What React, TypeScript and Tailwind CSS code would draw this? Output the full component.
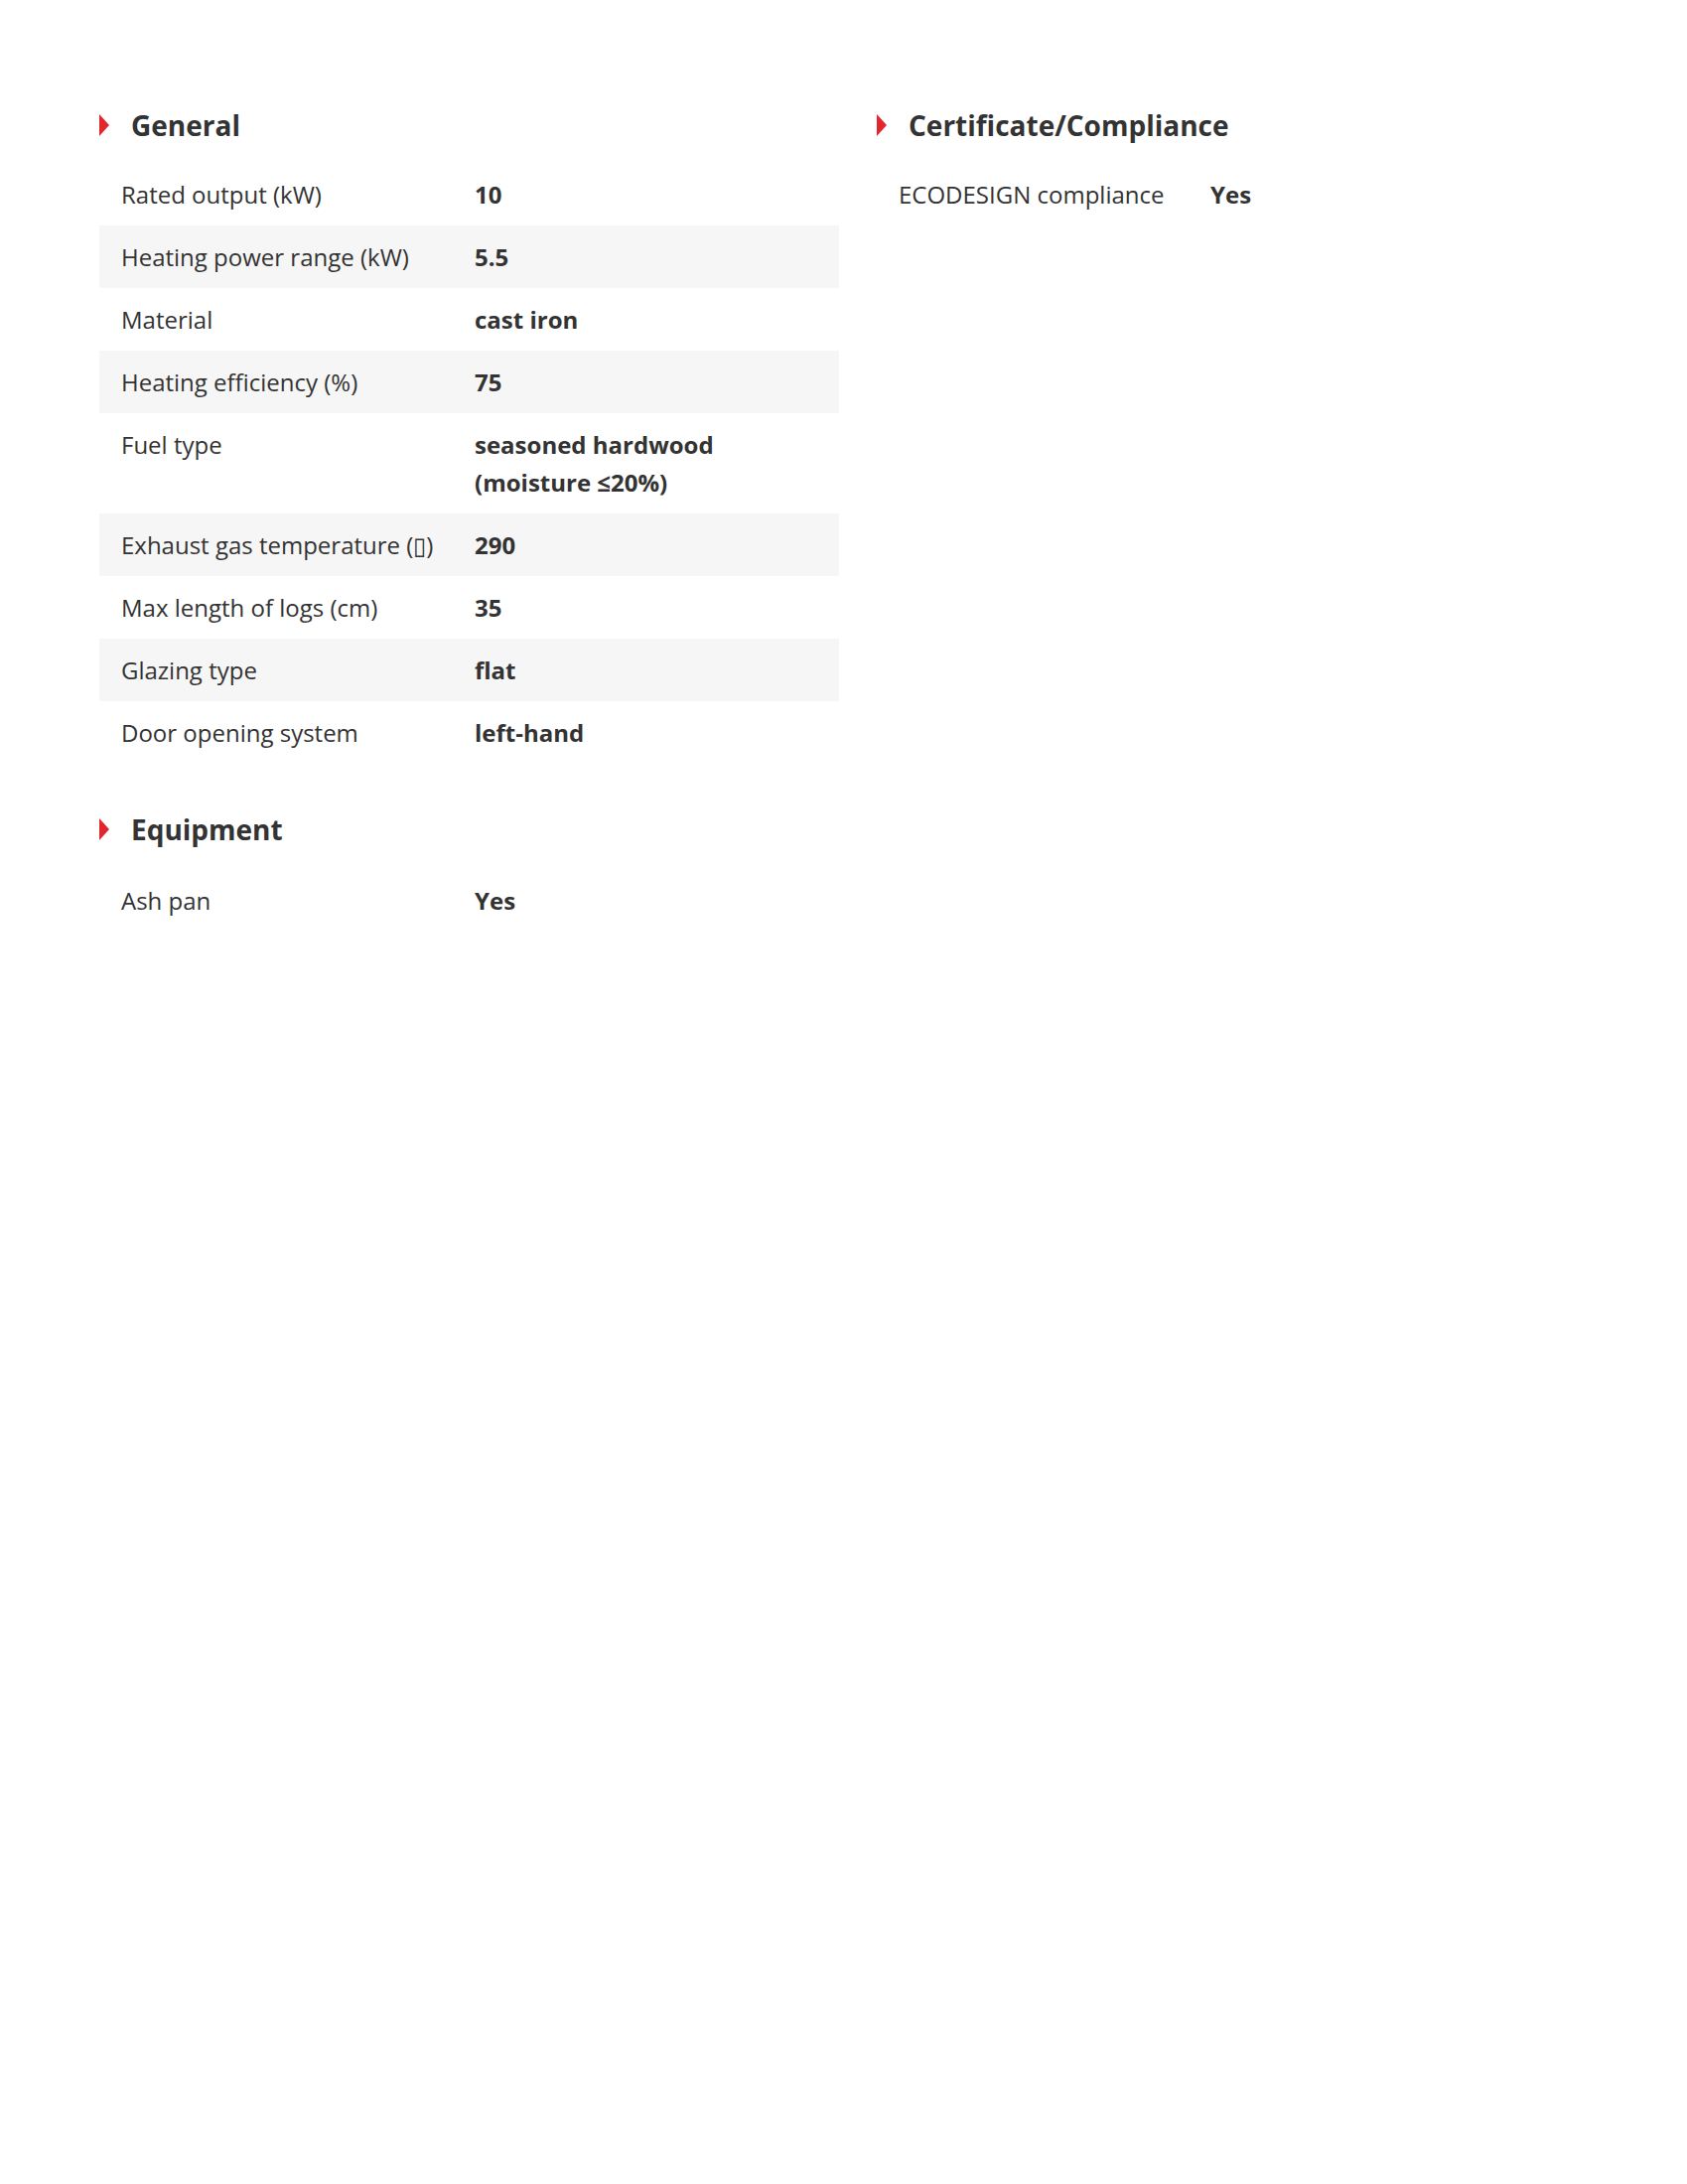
import React from 'react'

type Spec = { label: React.ReactNode; value: string }

const general: Spec[] = [
  { label: 'Rated output (kW)', value: '10' },
  { label: 'Heating power range (kW)', value: '5.5' },
  { label: 'Material', value: 'cast iron' },
  { label: 'Heating efficiency (%)', value: '75' },
  { label: 'Fuel type', value: 'seasoned hardwood (moisture ≤20%)' },
  { label: 'Exhaust gas temperature (▯)', value: '290' },
  { label: 'Max length of logs (cm)', value: '35' },
  { label: 'Glazing type', value: 'flat' },
  { label: 'Door opening system', value: 'left-hand' },
]

const equipment: Spec[] = [{ label: 'Ash pan', value: 'Yes' }]

const compliance: Spec[] = [{ label: 'ECODESIGN compliance', value: 'Yes' }]

function SectionTitle({ title }: { title: string }) {
  return (
    <div className="flex items-center h-[40px]">
      <svg width="10" height="22" viewBox="0 0 10 22" className="shrink-0">
        <polygon points="0,0 10,11 0,22" fill="#e3262d" />
      </svg>
      <h2 className="ml-[22px] text-[28px] font-bold text-[#333333] leading-none">{title}</h2>
    </div>
  )
}

function SpecTable({ rows, labelWidth }: { rows: Spec[]; labelWidth: string }) {
  return (
    <div className="flex flex-col">
      {rows.map((row, i) => (
        <div
          key={i}
          className={`flex items-start pt-[13px] pb-[12px] leading-[38px] text-[24px] text-[#333333] ${
            i % 2 === 1 ? 'bg-[#f6f6f6]' : ''
          }`}
        >
          <div className={`${labelWidth} shrink-0 pl-[22px] pr-[10px]`}>{row.label}</div>
          <div className="flex-1 pr-[20px] font-bold">{row.value}</div>
        </div>
      ))}
    </div>
  )
}

export default function App() {
  return (
    <div
      className="min-h-[2199px] w-full bg-white pt-[106px] pl-[100px]"
      style={{ fontFamily: '"Open Sans", "Noto Sans", sans-serif' }}
    >
      <div className="grid grid-cols-[745px_745px] gap-x-[38px] items-start">
        {/* left column */}
        <div className="flex flex-col">
          <SectionTitle title="General" />
          <div className="mt-[18px]">
            <SpecTable rows={general} labelWidth="w-[378px]" />
          </div>
          <div className="mt-[46px]">
            <SectionTitle title="Equipment" />
          </div>
          <div className="mt-[20px]">
            <SpecTable rows={equipment} labelWidth="w-[378px]" />
          </div>
        </div>

        {/* right column */}
        <div className="flex flex-col">
          <SectionTitle title="Certificate/Compliance" />
          <div className="mt-[18px]">
            <SpecTable rows={compliance} labelWidth="w-[336px]" />
          </div>
        </div>
      </div>
    </div>
  )
}
